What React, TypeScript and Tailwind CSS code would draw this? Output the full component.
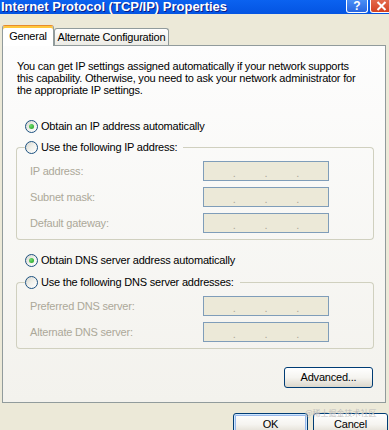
import React from "react";

function Radio({ checked }: { checked?: boolean }) {
  return (
    <span className="flex h-[13px] w-[13px] shrink-0 items-center justify-center rounded-full border border-[#1c5180] bg-linear-to-br from-[#d6d6cf] via-[#f1f1ec] to-white">
      {checked && (
        <span className="h-[5px] w-[5px] rounded-full bg-[radial-gradient(circle_at_35%_35%,#6fdc6f,#1e9c1e)]" />
      )}
    </span>
  );
}

function IpBox() {
  return (
    <div className="flex h-[20px] w-[126px] items-center border border-[#7f9db9] bg-[#ece9d8] pt-[5px] text-[#aca899] leading-[11px]">
      <span className="flex-1" />
      <span>.</span>
      <span className="flex-1" />
      <span>.</span>
      <span className="flex-1" />
      <span>.</span>
      <span className="flex-1" />
    </div>
  );
}

function GroupBox({
  label,
  rows,
  className,
}: {
  label: string;
  rows: string[];
  className: string;
}) {
  return (
    <div className={className}>
      <div className="flex h-[16px] items-center">
        <div className="h-[8px] w-[9px] self-end rounded-tl-[4px] border-l border-t border-[#d0d0bf]" />
        <Radio />
        <span className="ml-[3px] mr-[6px] whitespace-nowrap">{label}</span>
        <div className="h-[8px] flex-1 self-end rounded-tr-[4px] border-r border-t border-[#d0d0bf]" />
      </div>
      <div className="flex flex-col gap-[6px] rounded-b-[4px] border-x border-b border-[#d0d0bf] py-[6px]">
        {rows.map((r) => (
          <div key={r} className="flex h-[20px] items-center">
            <span className="ml-[13px] w-[173px] text-[#aca899]">{r}</span>
            <IpBox />
          </div>
        ))}
      </div>
    </div>
  );
}

function XpButton({
  children,
  className,
}: {
  children: React.ReactNode;
  className: string;
}) {
  return (
    <div
      className={`flex items-center justify-center rounded-[3px] border border-[#003c74] bg-linear-to-b from-white via-[#f5f4f0] to-[#dcd7cb] ${className}`}
    >
      {children}
    </div>
  );
}

export default function App() {
  return (
    <div className="relative h-[430px] w-[389px] overflow-hidden bg-[#ece9d8] font-['Liberation_Sans',Arial,sans-serif] text-[11px] tracking-[-0.2px] text-black">
      {/* Title bar */}
      <div className="flex h-[14px] items-start overflow-hidden bg-linear-to-b from-[#0b62f0] to-[#0454e2]">
        <div className="min-w-0 flex-1 whitespace-nowrap pl-[1px] text-[13px] font-bold leading-[13px] tracking-normal text-white [text-shadow:1px_1px_0_#0a1c86]">
          Internet Protocol (TCP/IP) Properties
        </div>
        <div className="-mr-[3px] flex shrink-0 gap-[2px]">
          <div className="flex h-[13px] w-[22px] items-center justify-center rounded-b-[3px] border-x border-b border-white bg-linear-to-b from-[#4a8ff6] to-[#2a66e0] text-[12px] font-bold leading-[12px] tracking-normal text-white">
            ?
          </div>
          <div className="flex h-[13px] w-[22px] items-center justify-center rounded-b-[3px] border-x border-b border-white bg-linear-to-b from-[#e36a4c] to-[#d4401f]">
            <svg width="11" height="10" viewBox="0 0 11 10">
              <path d="M1.5 1 L9.5 9 M9.5 1 L1.5 9" stroke="white" strokeWidth="2" />
            </svg>
          </div>
        </div>
      </div>

      {/* Tabs */}
      <div className="flex items-end pl-[2px] pt-[11px]">
        <div className="relative z-10 -mb-[1px] flex h-[21px] w-[52px] items-center justify-center rounded-t-[3px] border-x border-t border-x-[#919b9c] border-t-[#e68b2c] bg-white shadow-[inset_0_2px_0_#ffc73c]">
          General
        </div>
        <div className="flex h-[17px] w-[115px] items-center justify-center rounded-t-[3px] border-x border-t border-[#919b9c] bg-linear-to-b from-white to-[#ecebe5]">
          Alternate Configuration
        </div>
      </div>

      {/* Panel */}
      <div className="ml-[2px] flex h-[358px] w-[384px] flex-col border border-[#919b9c] bg-linear-to-b from-[#fdfdfd] to-[#f3f2ed]">
        <p className="ml-[14px] mt-[14px] leading-[12px]">
          You can get IP settings assigned automatically if your network supports
          <br />
          this capability. Otherwise, you need to ask your network administrator for
          <br />
          the appropriate IP settings.
        </p>

        <div className="ml-[22px] mt-[22px] flex h-[16px] items-center">
          <Radio checked />
          <span className="ml-[3px]">Obtain an IP address automatically</span>
        </div>

        <GroupBox
          className="ml-[13px] mr-[11px] mt-[5px]"
          label="Use the following IP address:"
          rows={["IP address:", "Subnet mask:", "Default gateway:"]}
        />

        <div className="ml-[22px] mt-[12px] flex h-[16px] items-center">
          <Radio checked />
          <span className="ml-[3px]">Obtain DNS server address automatically</span>
        </div>

        <GroupBox
          className="ml-[13px] mr-[11px] mt-[6px]"
          label="Use the following DNS server addresses:"
          rows={["Preferred DNS server:", "Alternate DNS server:"]}
        />

        <XpButton className="mr-[12px] mt-[18px] h-[21px] w-[89px] self-end">
          Advanced...
        </XpButton>
      </div>

      {/* Bottom buttons */}
      <div className="mt-[10px] flex justify-end gap-[5px] pr-[1px]">
        <XpButton className="h-[23px] w-[75px] shadow-[inset_0_0_0_1px_#cee7ff,inset_0_0_0_2px_#98b8ea]">
          OK
        </XpButton>
        <XpButton className="h-[23px] w-[75px]">Cancel</XpButton>
      </div>

      <div className="absolute left-[305px] top-[408px] font-['Noto_Sans_CJK_SC',sans-serif] text-[8px] leading-[10px] tracking-normal text-[#bdbdbd]">
        @稀土掘金技术社区
      </div>
    </div>
  );
}
